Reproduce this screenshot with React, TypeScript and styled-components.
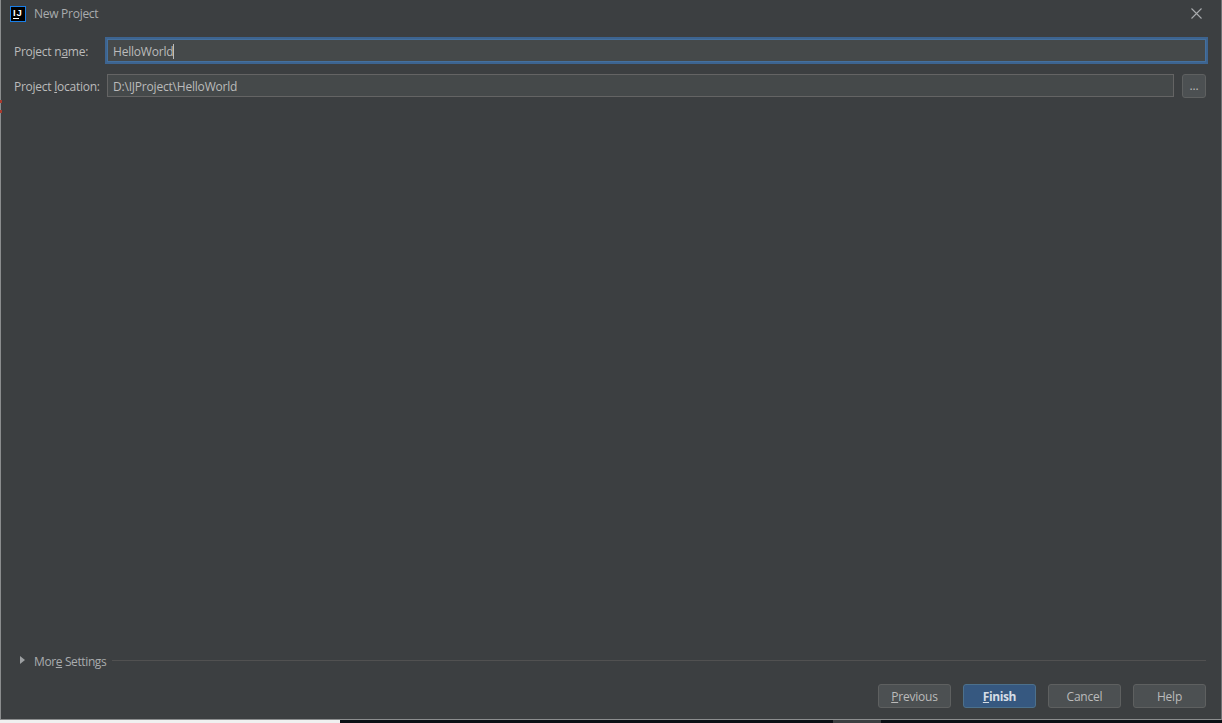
import styled, { createGlobalStyle } from "styled-components";

const GlobalStyle = createGlobalStyle`
  html, body {
    margin: 0;
    padding: 0;
    background: #0b0f14;
    overflow: hidden;
  }
`;

const CloseIcon = () => (
  <svg width="11" height="11" viewBox="0 0 11 11">
    <path d="M0.5 0.5L10.5 10.5M10.5 0.5L0.5 10.5" stroke="#a9acae" strokeWidth="1.1" fill="none" />
  </svg>
);

const Logo = () => (
  <LogoBox>
    <svg width="16" height="16" viewBox="0 0 16 16">
      <rect x="0.5" y="0.5" width="15" height="15" fill="#000" stroke="#1a7fe8" strokeWidth="1" />
      <text x="3" y="10" fontFamily="Liberation Sans, sans-serif" fontWeight="700" fontSize="9.5" letterSpacing="0.9" fill="#fff">
        IJ
      </text>
      <rect x="3" y="12" width="6" height="1" fill="#fff" />
    </svg>
  </LogoBox>
);

export default function App() {
  return (
    <>
      <GlobalStyle />
      <Screen>
        <Dialog>
          <RedMark $top={100} />
          <RedMark $top={110} />
          <TitleBar>
            <Logo />
            <Title>New Project</Title>
            <CloseButton>
              <CloseIcon />
            </CloseButton>
          </TitleBar>
          <Form>
            <FormRow>
              <Label>Project n<u>a</u>me:</Label>
              <FocusedInput>
                HelloWorld
                <Caret />
              </FocusedInput>
            </FormRow>
            <FormRow>
              <Label>Project <u>l</u>ocation:</Label>
              <PathInput>D:\IJProject\HelloWorld</PathInput>
              <BrowseButton>...</BrowseButton>
            </FormRow>
          </Form>
          <MoreSettings>
            <Arrow />
            <MoreLabel>Mor<u>e</u> Settings</MoreLabel>
            <Rule />
          </MoreSettings>
          <Footer>
            <Button><u>P</u>revious</Button>
            <Button $primary><u>F</u>inish</Button>
            <Button>Cancel</Button>
            <Button>Help</Button>
          </Footer>
        </Dialog>
        <Desktop>
          <LightStrip />
          <DarkStrip />
          <GreyStrip />
          <DarkStrip $grow />
        </Desktop>
      </Screen>
    </>
  );
}

const Screen = styled.div`
  width: 1222px;
  height: 723px;
  display: flex;
  flex-direction: column;
  font-family: "Open Sans", "Noto Sans", sans-serif;
  font-size: 12px;
  letter-spacing: -0.2px;
  color: #bbbbbb;
`;

const Dialog = styled.div`
  position: relative;
  box-sizing: border-box;
  height: 720px;
  display: flex;
  flex-direction: column;
  background: #3c3f41;
  border-left: 1px solid #8b8d8e;
  border-right: 1px solid #6f7274;
  border-bottom: 1px solid #8b8d8e;
`;

const RedMark = styled.div<{ $top: number }>`
  position: absolute;
  left: -1px;
  top: ${(p) => p.$top}px;
  width: 2px;
  height: 3px;
  background: #a83a2e;
`;

const TitleBar = styled.div`
  height: 27px;
  display: flex;
  align-items: center;
  padding: 0 19px 0 9px;
`;

const LogoBox = styled.div`
  width: 16px;
  height: 16px;
  margin-right: 8px;
  display: flex;
`;

const Title = styled.div`
  flex: 1;
  color: #a9acae;
  font-size: 12px;
  letter-spacing: -0.27px;
`;

const CloseButton = styled.div`
  width: 11px;
  height: 11px;
  display: flex;
`;

const Form = styled.div`
  display: flex;
  flex-direction: column;
  gap: 12px;
  padding: 12px 15px 0 13px;
  flex: 1;
`;

const FormRow = styled.div`
  display: flex;
  align-items: center;
  height: 23px;
`;

const Label = styled.label`
  width: 93px;
  flex: none;
  padding-top: 2px;
  color: #bbbbbb;
  letter-spacing: -0.25px;
  white-space: nowrap;
`;

const FocusedInput = styled.div`
  flex: 1;
  box-sizing: border-box;
  height: 23px;
  display: flex;
  align-items: center;
  padding: 2px 0 0 5px;
  background: #45494a;
  border: 1px solid #44709e;
  outline: 2px solid #3d6490;
  color: #bbbbbb;
`;

const Caret = styled.span`
  width: 1px;
  height: 15px;
  background: #bbbbbb;
`;

const PathInput = styled.div`
  flex: 1;
  box-sizing: border-box;
  height: 23px;
  display: flex;
  align-items: center;
  padding: 2px 0 0 5px;
  background: #45494a;
  border: 1px solid #646464;
  color: #bbbbbb;
`;

const BrowseButton = styled.div`
  width: 24px;
  height: 24px;
  box-sizing: border-box;
  margin-left: 8px;
  display: flex;
  align-items: center;
  justify-content: center;
  background: #4c5052;
  border: 1px solid #5e6060;
  border-radius: 3px;
  color: #bbbbbb;
`;

const MoreSettings = styled.div`
  display: flex;
  align-items: center;
  height: 16px;
  padding: 0 15px 0 19px;
`;

const Arrow = styled.div`
  width: 0;
  height: 0;
  margin-bottom: 2px;
  border-left: 5px solid #9da0a2;
  border-top: 4.5px solid transparent;
  border-bottom: 4.5px solid transparent;
  margin-right: 9px;
`;

const MoreLabel = styled.div`
  color: #a9acae;
  letter-spacing: -0.38px;
  white-space: nowrap;
  margin-right: 6px;
`;

const Rule = styled.div`
  flex: 1;
  height: 1px;
  margin-bottom: 2px;
  background: #515151;
`;

const Footer = styled.div`
  display: flex;
  justify-content: flex-end;
  gap: 12px;
  padding: 15px 15px 11px 0;
`;

const Button = styled.div<{ $primary?: boolean }>`
  box-sizing: border-box;
  width: 73px;
  height: 24px;
  display: flex;
  align-items: center;
  justify-content: center;
  border-radius: 3px;
  background: ${(p) => (p.$primary ? "#365880" : "#4c5052")};
  border: 1px solid ${(p) => (p.$primary ? "#4c708c" : "#5e6060")};
  color: ${(p) => (p.$primary ? "#d5dde6" : "#bbbbbb")};
  font-weight: ${(p) => (p.$primary ? 700 : 400)};
  letter-spacing: ${(p) => (p.$primary ? "-0.4px" : "-0.2px")};
  white-space: pre;
`;

const Desktop = styled.div`
  flex: 1;
  display: flex;
`;

const LightStrip = styled.div`
  width: 340px;
  background: #f0f0f0;
`;

const DarkStrip = styled.div<{ $grow?: boolean }>`
  background: #0b0f14;
  width: 493px;
  flex: ${(p) => (p.$grow ? 1 : "none")};
`;

const GreyStrip = styled.div`
  width: 48px;
  background: #3c3f41;
`;
